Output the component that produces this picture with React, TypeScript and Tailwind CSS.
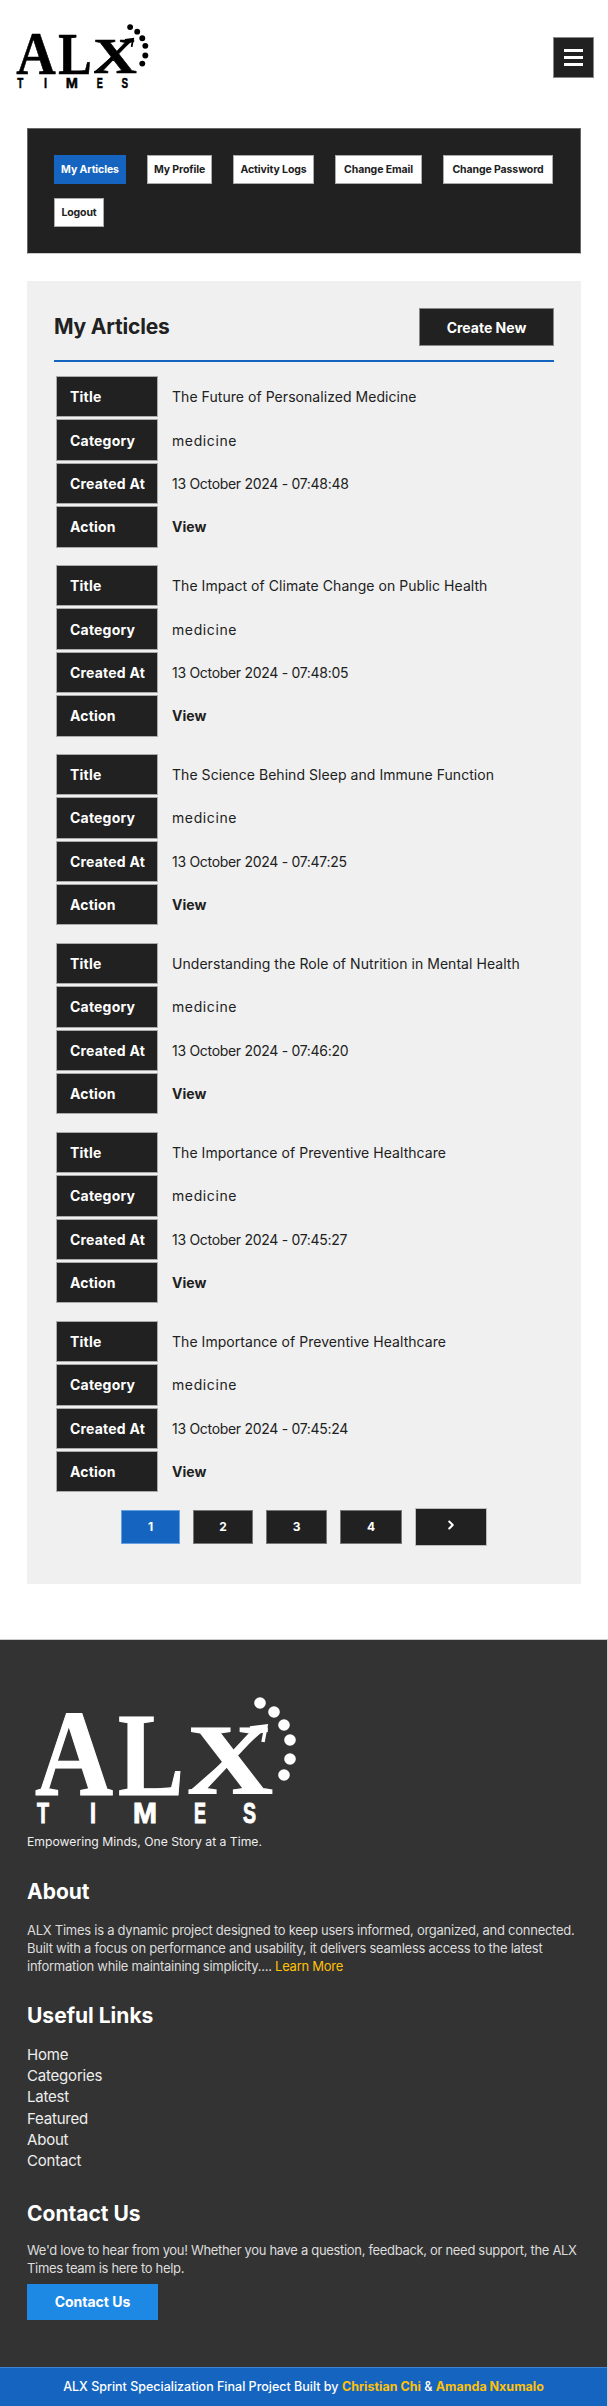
import React from 'react';
import { ChevronRight } from 'lucide-react';

const articles = [
  { title: 'The Future of Personalized Medicine', created: '13 October 2024 - 07:48:48' },
  { title: 'The Impact of Climate Change on Public Health', created: '13 October 2024 - 07:48:05' },
  { title: 'The Science Behind Sleep and Immune Function', created: '13 October 2024 - 07:47:25' },
  { title: 'Understanding the Role of Nutrition in Mental Health', created: '13 October 2024 - 07:46:20' },
  { title: 'The Importance of Preventive Healthcare', created: '13 October 2024 - 07:45:27' },
  { title: 'The Importance of Preventive Healthcare', created: '13 October 2024 - 07:45:24' },
];

const navItems = [
  { label: 'My Articles', w: 'w-[72px]', active: true },
  { label: 'My Profile', w: 'w-[65px]', active: false },
  { label: 'Activity Logs', w: 'w-[81px]', active: false },
  { label: 'Change Email', w: 'w-[87px]', active: false },
  { label: 'Change Password', w: 'w-[110px]', active: false },
  { label: 'Logout', w: 'w-[50px]', active: false },
];

const pages = [
  { label: '1', w: 'w-[59px]', cls: 'bg-[#1565c0] border-[#64a0e0]' },
  { label: '2', w: 'w-[60px]', cls: 'bg-[#212121] border-[#777]' },
  { label: '3', w: 'w-[61px]', cls: 'bg-[#212121] border-[#777]' },
  { label: '4', w: 'w-[62px]', cls: 'bg-[#212121] border-[#777]' },
];

const usefulLinks = ['Home', 'Categories', 'Latest', 'Featured', 'About', 'Contact'];

const Logo: React.FC<{ className: string }> = ({ className }) => (
  <svg viewBox="-4 -12 270 152" className={className} fill="currentColor" stroke="none">
    <g fontFamily='"Liberation Serif", serif' fontWeight="700" stroke="currentColor" strokeWidth="1.2">
      <text x="0" y="98" fontSize="122" textLength="78" lengthAdjust="spacingAndGlyphs">A</text>
      <text x="83" y="98" fontSize="118" textLength="66" lengthAdjust="spacingAndGlyphs">L</text>
      <text x="152" y="96" fontSize="99" textLength="86" lengthAdjust="spacingAndGlyphs">X</text>
    </g>
    <path d="M156 95L229 31" stroke="currentColor" strokeWidth="3.5" strokeLinecap="round" fill="none" />
    <path d="M215 31L231 29L228 45" stroke="currentColor" strokeWidth="3.5" fill="none" />
    {[[225, 6], [239, 15], [249, 28], [255, 43], [255, 62], [249, 78]].map(([cx, cy]) => (
      <circle key={cy} cx={cx} cy={cy} r="5.8" />
    ))}
    <g fontFamily='"Liberation Sans", sans-serif' fontWeight="700" fontSize="29" stroke="currentColor" strokeWidth="1">
      <text x="2" y="126" textLength="12" lengthAdjust="spacingAndGlyphs">T</text>
      <text x="55" y="126" textLength="6" lengthAdjust="spacingAndGlyphs">I</text>
      <text x="98" y="126" textLength="24" lengthAdjust="spacingAndGlyphs">M</text>
      <text x="159" y="126" textLength="12" lengthAdjust="spacingAndGlyphs">E</text>
      <text x="208" y="126" textLength="13" lengthAdjust="spacingAndGlyphs">S</text>
    </g>
  </svg>
);

const Row: React.FC<{ label: string; children: React.ReactNode }> = ({ label, children }) => (
  <tr>
    <th className="w-[102px] h-[41.4px] p-0 pl-[13px] text-left bg-[#212121] border border-[#aaa] text-white text-[14px] font-bold tracking-[0.2px]">{label}</th>
    <td className="h-[41.4px] p-0 pl-[12px] text-[14px] text-[#212121]">{children}</td>
  </tr>
);

const App: React.FC = () => (
  <div className="w-[608px] bg-white font-['Inter','Liberation_Sans',sans-serif]">
    {/* Header */}
    <header className="flex justify-between h-[128px] pl-[14px] pr-[14px]">
      <Logo className="w-[137px] h-[77px] mt-[18px] text-black" />
      <button className="flex flex-col items-center justify-center gap-[4px] w-[41px] h-[41px] mt-[37px] bg-[#212121] border border-[#888]">
        <span className="w-[19px] h-[3px] bg-white" />
        <span className="w-[19px] h-[3px] bg-white" />
        <span className="w-[19px] h-[3px] bg-white" />
      </button>
    </header>

    {/* Dashboard nav */}
    <nav className="mx-[27px] h-[126px] p-[26px] bg-[#212121] border border-[#666] border-b-[#ccc]">
      <div className="flex flex-wrap gap-x-[21px] gap-y-[14px]">
        {navItems.map(n => (
          <a key={n.label} className={`${n.w} h-[29px] flex items-center justify-center whitespace-nowrap text-[10.5px] font-bold tracking-[-0.1px] border ${n.active ? 'bg-[#1565c0] text-white border-[#1565c0]' : 'bg-white text-[#212121] border-[#aaa]'}`}>
            {n.label}
          </a>
        ))}
      </div>
    </nav>

    {/* Articles */}
    <main className="mx-[27px] mt-[27px] h-[1303px] px-[27px] pt-[27px] bg-[#f0f0f0]">
      <div className="flex items-center justify-between pb-[14px] border-b-2 border-[#1565c0]">
        <h2 className="text-[21px] font-bold text-[#212121] tracking-[-0.2px]">My Articles</h2>
        <a className="w-[135px] h-[38px] flex items-center justify-center bg-[#212121] border border-[#888] text-white text-[14px] font-bold">Create New</a>
      </div>

      <div className="mt-[12px]">
        {articles.map(a => (
          <table key={a.created} className="w-full mb-[13.4px] border-separate border-spacing-[2px]">
            <tbody>
              <Row label="Title"><span className="tracking-[0.05px]">{a.title}</span></Row>
              <Row label="Category"><span className="tracking-[0.6px]">medicine</span></Row>
              <Row label="Created At"><span className="tracking-[-0.3px]">{a.created}</span></Row>
              <Row label="Action"><span className="font-bold">View</span></Row>
            </tbody>
          </table>
        ))}
      </div>

      <div className="flex items-center justify-center gap-[13px] mt-[11px]">
        {pages.map(p => (
          <a key={p.label} className={`${p.w} h-[34px] flex items-center justify-center border text-white text-[12px] font-bold ${p.cls}`}>{p.label}</a>
        ))}
        <a className="w-[72px] h-[38px] flex items-center justify-center pb-[3px] bg-[#212121] border border-[#bbb] text-white">
          <ChevronRight size={14} strokeWidth={3.5} />
        </a>
      </div>
    </main>

    {/* Footer */}
    <footer className="mt-[55px] bg-[#333333] border-t border-r border-[#ccc] text-white">
      <div className="h-[727px] px-[27px] pt-[45px]">
        <Logo className="w-[270px] h-[152px] ml-[4px] text-white" />
        <p className="mt-[-4px] text-[12.2px] leading-[18px] text-[#eee]">Empowering Minds, One Story at a Time.</p>

        <h3 className="mt-[25px] text-[21px] leading-[32px] font-bold">About</h3>
        <p className="mt-[13px] text-[13px] leading-[18px] text-[#ddd] tracking-[-0.26px]">
          ALX Times is a dynamic project designed to keep users informed, organized, and connected. Built with a focus on performance and usability, it delivers seamless access to the latest information while maintaining simplicity.... <a className="text-[#ffc107]">Learn More</a>
        </p>

        <h3 className="mt-[25px] text-[21px] leading-[32px] font-bold">Useful Links</h3>
        <ul className="mt-[12px] text-[15px] leading-[21.2px] text-[#eee] tracking-[-0.2px]">
          {usefulLinks.map(l => <li key={l}>{l}</li>)}
        </ul>

        <h3 className="mt-[26.5px] text-[21px] leading-[32px] font-bold">Contact Us</h3>
        <p className="mt-[11.5px] text-[13px] leading-[18px] text-[#ddd] tracking-[-0.32px]">
          We'd love to hear from you! Whether you have a question, feedback, or need support, the ALX Times team is here to help.
        </p>
        <a className="mt-[6.5px] w-[131px] h-[36px] flex items-center justify-center bg-[#1e88e5] text-white text-[14px] font-bold">Contact Us</a>
      </div>
      <div className="h-[39px] flex items-center justify-center bg-[#1565c0] border-t border-[#3d84d6] text-[12.5px] font-medium text-white">
        <span>ALX Sprint Specialization Final Project Built by <b className="text-[#ffc107]">Christian Chi</b> &amp; <b className="text-[#ffc107]">Amanda Nxumalo</b></span>
      </div>
    </footer>
  </div>
);

export default App;
